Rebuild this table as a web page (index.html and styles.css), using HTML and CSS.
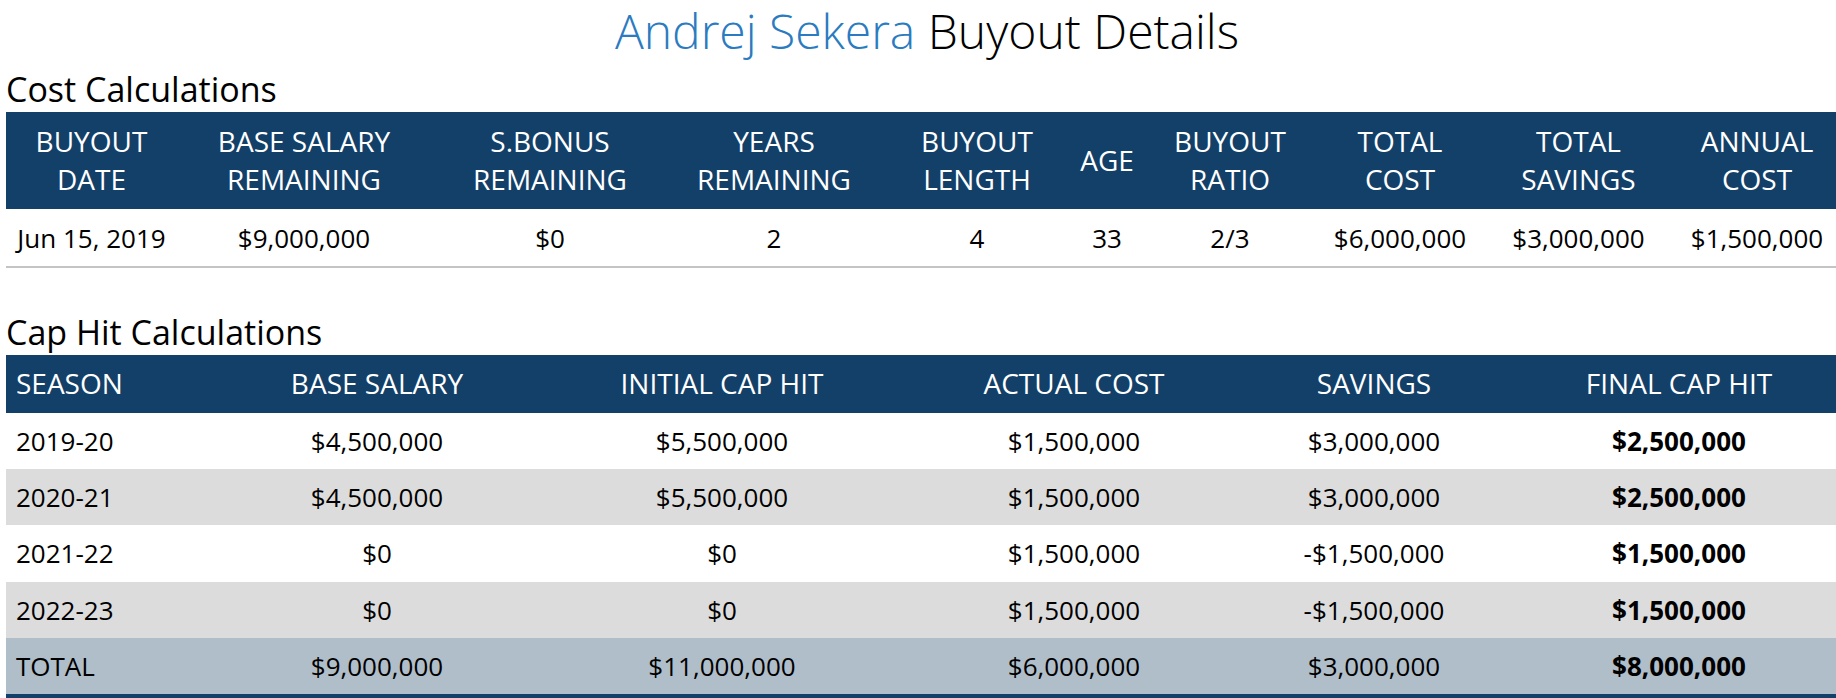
FILE: index.html
```html
<!DOCTYPE html>
<html>
<head>
<meta charset="utf-8">
<link rel="stylesheet" href="styles.css">
</head>
<body>
<div class="page">
  <h1 class="title"><span class="player">Andrej Sekera</span> Buyout Details</h1>

  <h2 class="section">Cost Calculations</h2>
  <table class="grid cost">
    <colgroup>
      <col class="k1"><col class="k2"><col class="k3"><col class="k4"><col class="k5">
      <col class="k6"><col class="k7"><col class="k8"><col class="k9"><col class="k10">
    </colgroup>
    <thead>
      <tr>
        <th>BUYOUT<br>DATE</th>
        <th>BASE SALARY<br>REMAINING</th>
        <th>S.BONUS<br>REMAINING</th>
        <th>YEARS<br>REMAINING</th>
        <th>BUYOUT<br>LENGTH</th>
        <th>AGE</th>
        <th>BUYOUT<br>RATIO</th>
        <th>TOTAL<br>COST</th>
        <th>TOTAL<br>SAVINGS</th>
        <th>ANNUAL<br>COST</th>
      </tr>
    </thead>
    <tbody>
      <tr>
        <td>Jun 15, 2019</td>
        <td>$9,000,000</td>
        <td>$0</td>
        <td>2</td>
        <td>4</td>
        <td>33</td>
        <td>2/3</td>
        <td>$6,000,000</td>
        <td>$3,000,000</td>
        <td>$1,500,000</td>
      </tr>
    </tbody>
  </table>

  <h2 class="section gap">Cap Hit Calculations</h2>
  <table class="grid caphit">
    <colgroup>
      <col class="s1"><col class="s2"><col class="s3"><col class="s4"><col class="s5"><col class="s6">
    </colgroup>
    <thead>
      <tr>
        <th class="left">SEASON</th>
        <th>BASE SALARY</th>
        <th>INITIAL CAP HIT</th>
        <th>ACTUAL COST</th>
        <th>SAVINGS</th>
        <th>FINAL CAP HIT</th>
      </tr>
    </thead>
    <tbody>
      <tr>
        <td class="left">2019-20</td><td>$4,500,000</td><td>$5,500,000</td><td>$1,500,000</td><td>$3,000,000</td><td class="strong">$2,500,000</td>
      </tr>
      <tr class="alt">
        <td class="left">2020-21</td><td>$4,500,000</td><td>$5,500,000</td><td>$1,500,000</td><td>$3,000,000</td><td class="strong">$2,500,000</td>
      </tr>
      <tr>
        <td class="left">2021-22</td><td>$0</td><td>$0</td><td>$1,500,000</td><td>-$1,500,000</td><td class="strong">$1,500,000</td>
      </tr>
      <tr class="alt">
        <td class="left">2022-23</td><td>$0</td><td>$0</td><td>$1,500,000</td><td>-$1,500,000</td><td class="strong">$1,500,000</td>
      </tr>
      <tr class="total">
        <td class="left">TOTAL</td><td>$9,000,000</td><td>$11,000,000</td><td>$6,000,000</td><td>$3,000,000</td><td class="strong">$8,000,000</td>
      </tr>
    </tbody>
  </table>
</div>
</body>
</html>
```

FILE: styles.css
```css
html, body {
  margin: 0;
  padding: 0;
  background: #ffffff;
}

body {
  font-family: "Open Sans", "Liberation Sans", sans-serif;
  color: #000000;
  overflow: hidden;
}

.page {
  padding: 4px 0 0 6px;
}

.title {
  margin: 0;
  padding-left: 12px;
  font-size: 48px;
  font-weight: 300;
  line-height: 54px;
  text-align: center;
  color: #000000;
}

.player {
  color: #2b7bc0;
}

.section {
  margin: 8px 0 0 0;
  font-size: 34px;
  font-weight: 400;
  line-height: 46px;
}

.section.gap {
  margin-top: 41px;
}

.grid {
  width: 1830px;
  table-layout: fixed;
  border-collapse: separate;
  border-spacing: 0;
  font-size: 26px;
  line-height: 38px;
}

.grid th {
  background: #134068;
  color: #ffffff;
  font-size: 28px;
  font-weight: 400;
  text-align: center;
  vertical-align: middle;
}

.grid td {
  text-align: center;
  vertical-align: middle;
}

.cost th {
  padding: 10px 2px 11px;
}

.cost td {
  padding: 10px 2px 9px;
  border-bottom: 2px solid #c4c4c4;
}

.caphit th {
  padding: 9px 10px 11px;
}

.caphit td {
  padding: 9px 10px 9.2px;
}

.caphit .left {
  text-align: left;
}

.caphit tr.alt td {
  background: #dcdcdc;
}

.caphit tr.total td {
  background: #b0bec9;
  border-bottom: 4px solid #134068;
}

.strong {
  font-weight: 700;
}

.k1 { width: 171px; }
.k2 { width: 254px; }
.k3 { width: 238px; }
.k4 { width: 210px; }
.k5 { width: 196px; }
.k6 { width: 64px; }
.k7 { width: 182px; }
.k8 { width: 158px; }
.k9 { width: 199px; }
.k10 { width: 158px; }

.s1 { width: 226px; }
.s2 { width: 290px; }
.s3 { width: 400px; }
.s4 { width: 304px; }
.s5 { width: 296px; }
.s6 { width: 314px; }
```
